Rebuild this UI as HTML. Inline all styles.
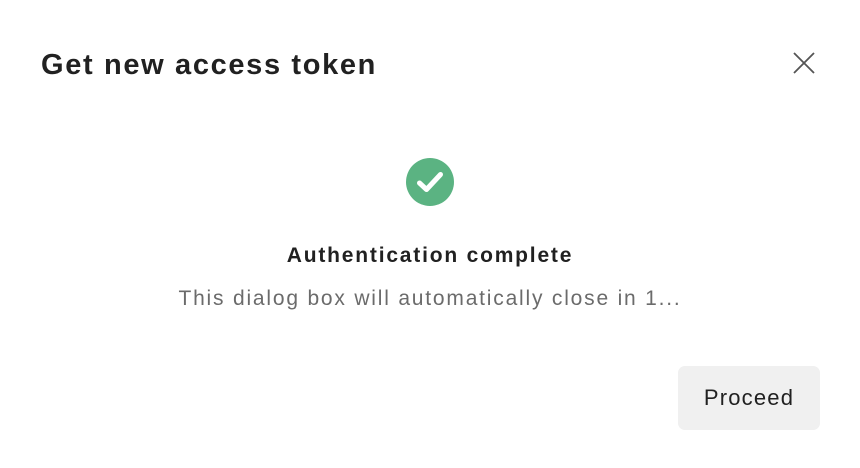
<!DOCTYPE html>
<html><head><style>
body{margin:0;width:860px;height:468px;background:#fff;font-family:"Liberation Sans",sans-serif;position:relative;overflow:hidden}
.t{position:absolute;left:41px;top:49px;font-size:29px;font-weight:bold;color:#212121;letter-spacing:1.65px;white-space:nowrap}
.x{position:absolute;left:792px;top:51px}
.ic{position:absolute;left:406px;top:158px}
.h{position:absolute;left:0;width:860px;text-align:center;top:244px;font-size:21px;font-weight:bold;color:#212121;letter-spacing:1.8px}
.s{position:absolute;left:0;width:860px;text-align:center;top:287px;font-size:21px;color:#6b6b6b;letter-spacing:1.8px;white-space:nowrap}
.b{position:absolute;left:678px;top:366px;width:142px;height:64px;background:#f0f0f0;border-radius:7px;font-size:22px;color:#212121;line-height:64px;text-align:center;letter-spacing:1.2px}
</style></head><body>
<div class="t">Get new access token</div>
<svg class="x" width="24" height="24" viewBox="0 0 24 24"><path d="M2 2L22 22M22 2L2 22" stroke="#555" stroke-width="1.8" fill="none"/></svg>
<svg class="ic" width="48" height="48" viewBox="0 0 48 48"><circle cx="24" cy="24" r="24" fill="#5bb382"/><path d="M13.5 25L20.5 31.5L34.5 16.5" stroke="#fff" stroke-width="5" stroke-linecap="round" stroke-linejoin="round" fill="none"/></svg>
<div class="h">Authentication complete</div>
<div class="s">This dialog box will automatically close in 1...</div>
<div class="b">Proceed</div>
</body></html>
